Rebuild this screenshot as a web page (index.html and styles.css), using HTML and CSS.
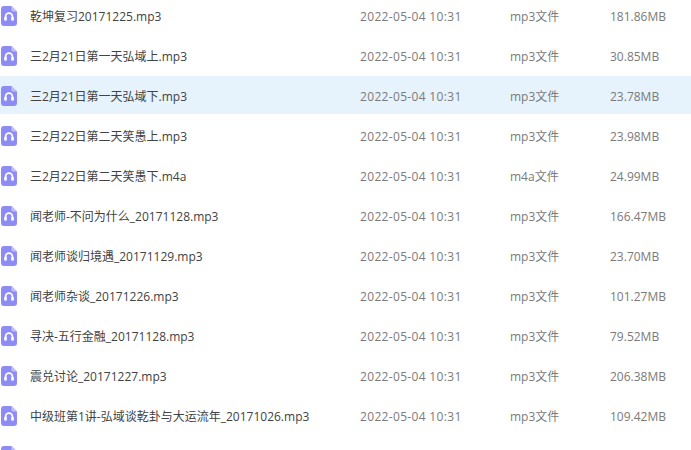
FILE: index.html
```html
<!DOCTYPE html>
<html lang="zh-CN">
<head>
<meta charset="utf-8">
<title>文件列表</title>
<link rel="stylesheet" href="styles.css">
</head>
<body>
<svg class="defs" width="0" height="0" aria-hidden="true">
  <symbol id="audio" viewBox="0 0 16 20">
    <path d="M3 0H10.5L16 5.5V17a3 3 0 0 1-3 3H3a3 3 0 0 1-3-3V3a3 3 0 0 1 3-3Z" fill="#8d8cf6"/>
    <path d="M10.5 0L16 5.5H12a1.5 1.5 0 0 1-1.5-1.5Z" fill="#c3c0fb"/>
    <path d="M4.6 13.5V10.6a3.4 3.4 0 0 1 6.8 0V13.5" fill="none" stroke="#fff" stroke-width="1.7"/>
    <rect x="3.2" y="10.8" width="2.6" height="4" rx="1" fill="#fff"/>
    <rect x="10.2" y="10.8" width="2.6" height="4" rx="1" fill="#fff"/>
  </symbol>
</svg>
<ul class="list">
  <li class="row"><svg class="icon"><use href="#audio"/></svg><span class="name">乾坤复习20171225.mp3</span><span class="date">2022-05-04 10:31</span><span class="type">mp3文件</span><span class="size">181.86MB</span></li>
  <li class="row"><svg class="icon"><use href="#audio"/></svg><span class="name">三2月21日第一天弘域上.mp3</span><span class="date">2022-05-04 10:31</span><span class="type">mp3文件</span><span class="size">30.85MB</span></li>
  <li class="row active"><svg class="icon"><use href="#audio"/></svg><span class="name">三2月21日第一天弘域下.mp3</span><span class="date">2022-05-04 10:31</span><span class="type">mp3文件</span><span class="size">23.78MB</span></li>
  <li class="row"><svg class="icon"><use href="#audio"/></svg><span class="name">三2月22日第二天笑愚上.mp3</span><span class="date">2022-05-04 10:31</span><span class="type">mp3文件</span><span class="size">23.98MB</span></li>
  <li class="row"><svg class="icon"><use href="#audio"/></svg><span class="name">三2月22日第二天笑愚下.m4a</span><span class="date">2022-05-04 10:31</span><span class="type">m4a文件</span><span class="size">24.99MB</span></li>
  <li class="row"><svg class="icon"><use href="#audio"/></svg><span class="name">闻老师-不问为什么_20171128.mp3</span><span class="date">2022-05-04 10:31</span><span class="type">mp3文件</span><span class="size">166.47MB</span></li>
  <li class="row"><svg class="icon"><use href="#audio"/></svg><span class="name">闻老师谈归境遇_20171129.mp3</span><span class="date">2022-05-04 10:31</span><span class="type">mp3文件</span><span class="size">23.70MB</span></li>
  <li class="row"><svg class="icon"><use href="#audio"/></svg><span class="name">闻老师杂谈_20171226.mp3</span><span class="date">2022-05-04 10:31</span><span class="type">mp3文件</span><span class="size">101.27MB</span></li>
  <li class="row"><svg class="icon"><use href="#audio"/></svg><span class="name">寻决-五行金融_20171128.mp3</span><span class="date">2022-05-04 10:31</span><span class="type">mp3文件</span><span class="size">79.52MB</span></li>
  <li class="row"><svg class="icon"><use href="#audio"/></svg><span class="name">震兑讨论_20171227.mp3</span><span class="date">2022-05-04 10:31</span><span class="type">mp3文件</span><span class="size">206.38MB</span></li>
  <li class="row"><svg class="icon"><use href="#audio"/></svg><span class="name">中级班第1讲-弘域谈乾卦与大运流年_20171026.mp3</span><span class="date">2022-05-04 10:31</span><span class="type">mp3文件</span><span class="size">109.42MB</span></li>
  <li class="row"><svg class="icon"><use href="#audio"/></svg></li>
</ul>
</body>
</html>
```
FILE: styles.css
```css
html, body {
  margin: 0;
  height: 100%;
  overflow: hidden;
  background: #fff;
}
.defs {
  position: absolute;
}
.list {
  list-style: none;
  margin: -4px 0 0;
  padding: 0;
  font: 12px "Open Sans", "Noto Sans CJK SC", sans-serif;
  color: #7a7a7a;
}
.row {
  display: flex;
  align-items: center;
  box-sizing: border-box;
  height: 38px;
  margin-bottom: 2px;
  padding: 2px 0 0 1px;
}
.active {
  background: #e6f3fc;
}
.icon {
  width: 16px;
  height: 20px;
  flex: none;
  margin-right: 13px;
}
.name {
  width: 330px;
  flex: none;
  color: #424242;
}
.date {
  width: 150px;
  flex: none;
  letter-spacing: .33px;
}
.type {
  width: 100px;
  flex: none;
}
```
